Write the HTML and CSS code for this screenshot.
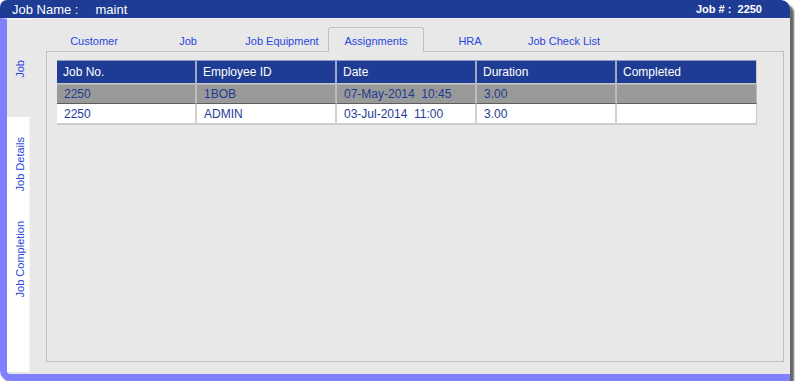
FILE: index.html
```html
<!DOCTYPE html>
<html lang="en">
<head>
  <meta charset="UTF-8" />
  <title>Job - Assignments</title>
  <link rel="stylesheet" href="styles.css">
</head>
<body>

  <div class="window">
    <div class="titlebar">
      <span class="job-name">Job Name :</span>
      <span class="job-value">maint</span>
      <span class="job-number">Job # :&nbsp; 2250</span>
    </div>

    <div class="frame">
      <div class="side-tabs">
        <div class="side-tab active"><span>Job</span></div>
        <div class="side-rest">
          <div class="side-tab tall"><span>Job Details</span></div>
          <div class="side-tab"><span>Job Completion</span></div>
        </div>
      </div>

      <div class="main">
        <div class="tabs">
          <div class="tab">Customer</div>
          <div class="tab">Job</div>
          <div class="tab">Job Equipment</div>
          <div class="tab active">Assignments</div>
          <div class="tab">HRA</div>
          <div class="tab">Job Check List</div>
        </div>

        <div class="panel">
          <table class="grid">
            <colgroup>
              <col><col><col><col><col>
            </colgroup>
            <thead>
              <tr>
                <th>Job No.</th>
                <th>Employee ID</th>
                <th>Date</th>
                <th>Duration</th>
                <th>Completed</th>
              </tr>
            </thead>
            <tbody>
              <tr class="selected">
                <td>2250</td>
                <td>1BOB</td>
                <td>07-May-2014&nbsp; 10:45</td>
                <td>3.00</td>
                <td></td>
              </tr>
              <tr>
                <td>2250</td>
                <td>ADMIN</td>
                <td>03-Jul-2014&nbsp; 11:00</td>
                <td>3.00</td>
                <td></td>
              </tr>
            </tbody>
          </table>
        </div>
      </div>
    </div>
  </div>

</body>
</html>
```

FILE: styles.css
```css
body {
  margin: 0;
  background-color: white;
  font-family: "Liberation Sans", Arial, sans-serif;
}

.window {
  width: 790px;
  border-radius: 7px 9px 0 10px;
  box-shadow: 4px 4px 2px rgba(0, 0, 0, 0.6);
}

.titlebar {
  height: 18px;
  background-color: #1e3c94;
  color: white;
  border-radius: 7px 9px 0 0;
  display: flex;
  align-items: center;
  padding: 0 28px 0 12px;
}

.job-name {
  font-size: 13px;
}

.job-value {
  font-size: 13px;
  margin-left: 17px;
}

.job-number {
  margin-left: auto;
  font-size: 11px;
  font-weight: bold;
}

.frame {
  box-sizing: border-box;
  height: 363px;
  display: flex;
  background-color: #e8e8e8;
  border-left: 7px solid #8080ff;
  border-bottom: 7px solid #8080ff;
  border-bottom-left-radius: 10px;
  border-top: 1px solid #f2f2f6;
}

.side-tabs {
  width: 23px;
  display: flex;
  flex-direction: column;
}

.side-tab {
  height: 97px;
  display: flex;
  align-items: center;
  justify-content: center;
  color: #2845e0;
  font-size: 11px;
  padding-left: 3px;
}

.side-tab.tall {
  height: 94px;
}

.side-tab span {
  writing-mode: vertical-rl;
  transform: rotate(180deg);
}

.side-tab.active {
  height: 97px;
  background-color: #e8e8e8;
  border-top: 1px solid #f4f4f4;
}

.side-rest {
  flex: 1;
  background-color: white;
  border-right: 1px solid #f4f4f4;
  margin-bottom: 2px;
}

.main {
  flex: 1;
  display: flex;
  flex-direction: column;
  padding: 8px 6px 12px 16px;
}

.tabs {
  display: flex;
  height: 24px;
  padding-left: 1px;
}

.tab {
  width: 94px;
  display: flex;
  align-items: center;
  justify-content: center;
  color: #2845e0;
  font-size: 11px;
  padding-top: 3px;
  box-sizing: border-box;
}

.tab.active {
  width: 96px;
  margin: 0 -1px;
  background-color: #e8e8e8;
  border: 1px solid #c0c0c0;
  border-bottom: none;
  border-radius: 3px 3px 0 0;
  height: 25px;
  padding-top: 2px;
  position: relative;
  z-index: 1;
}

.panel {
  flex: 1;
  border: 1px solid #c0c0c0;
  padding: 8px 0 0 10px;
}

.grid {
  table-layout: fixed;
  width: 700px;
  border-collapse: separate;
  border-spacing: 0;
  font-size: 12px;
}

.grid col {
  width: 140px;
}

.grid th {
  height: 22px;
  background-color: #1e3c94;
  color: white;
  font-weight: normal;
  text-align: left;
  padding: 0 6px;
  border-top: 1px solid #8e9ac4;
  border-right: 2px solid #9ea8c8;
  border-bottom: 1px solid #c4c4c4;
}

.grid td {
  height: 19px;
  padding: 0 7px;
  color: #1e3c94;
  background-color: white;
  border-right: 2px solid #d0d0d0;
  border-bottom: 1px solid #c8c8c8;
}

.grid th:last-child,
.grid td:last-child {
  border-right: 1px solid #c8c8c8;
}

.grid tr.selected td {
  background-color: #999999;
  border-right-color: #bcbcbc;
  border-bottom: 1px solid #5e5e5e;
  border-top: 1px solid #b4b4b4;
  height: 18px;
}

.grid tbody tr:last-child td {
  border-bottom: 2px solid #cccccc;
}
```
